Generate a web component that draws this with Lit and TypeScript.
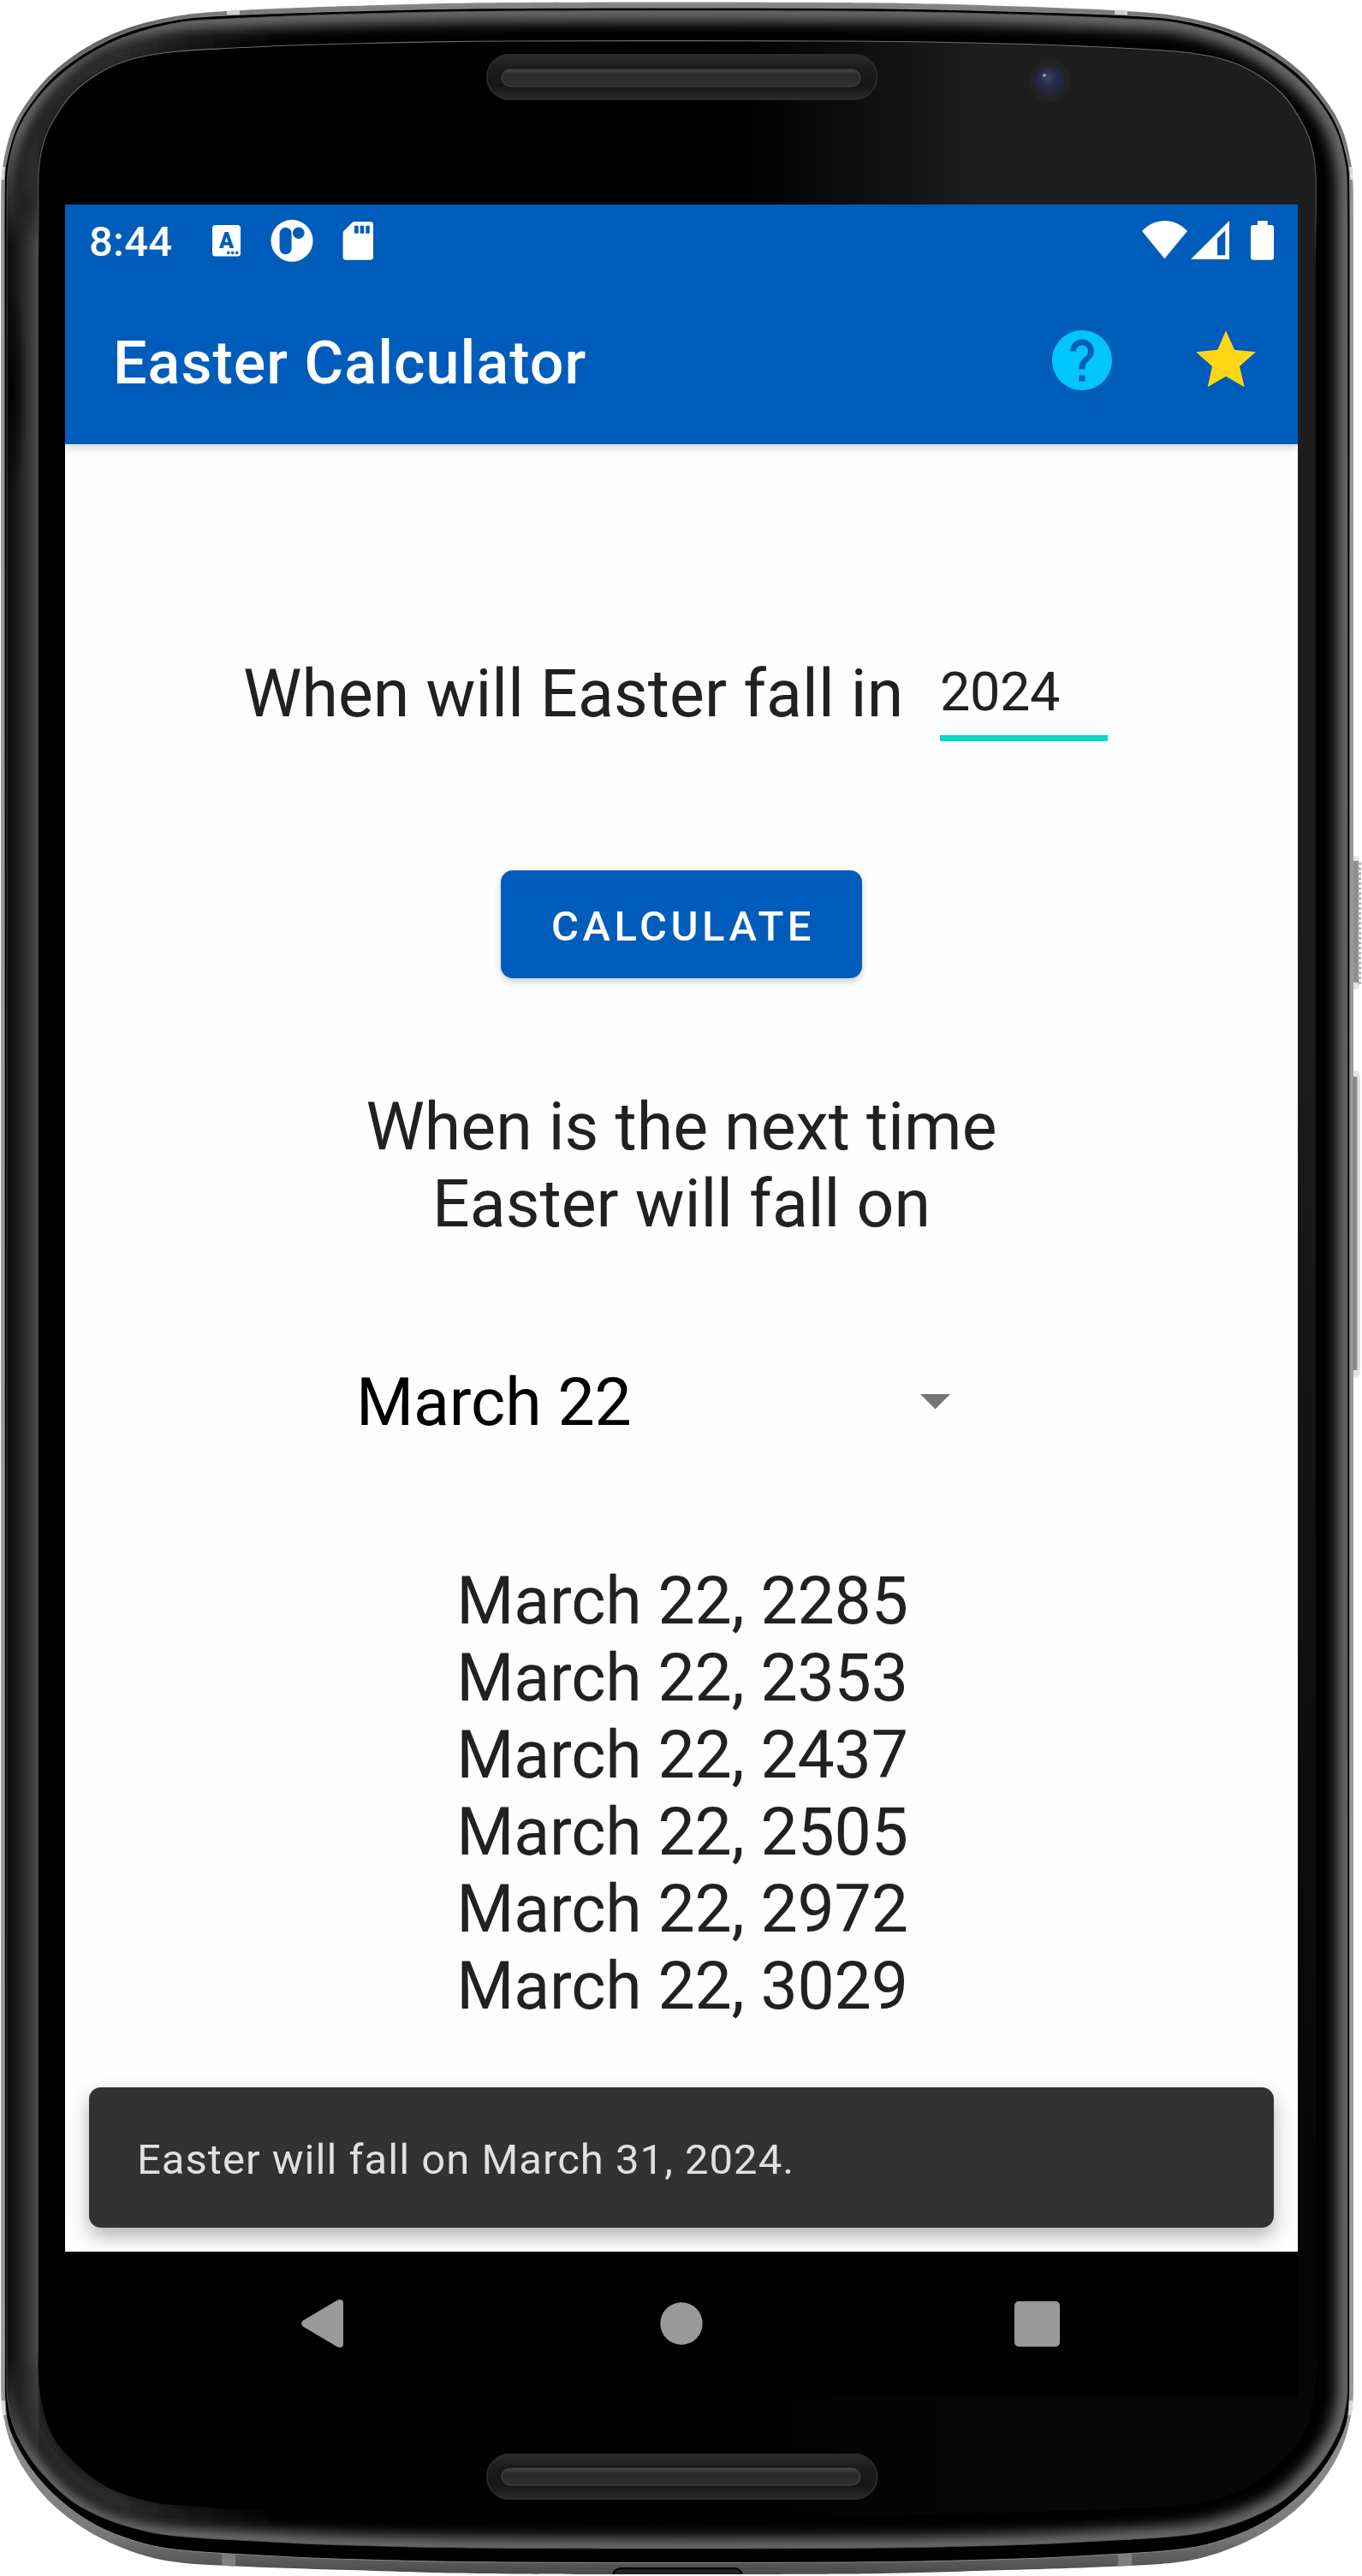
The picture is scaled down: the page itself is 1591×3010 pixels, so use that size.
import { LitElement, html, css, svg } from "lit";
import { customElement, property, state } from "lit/decorators.js";

type Point = [number, number];

const BODY_AXIS = 1582;

/** Smooth curve through the points, as cubic segments. */
function curve(points: Point[]): string {
  let d = "";
  for (let i = 0; i < points.length - 1; i++) {
    const p0 = points[Math.max(i - 1, 0)];
    const p1 = points[i];
    const p2 = points[i + 1];
    const p3 = points[Math.min(i + 2, points.length - 1)];
    const c1 = [p1[0] + (p2[0] - p0[0]) / 6, p1[1] + (p2[1] - p0[1]) / 6];
    const c2 = [p2[0] - (p3[0] - p1[0]) / 6, p2[1] - (p3[1] - p1[1]) / 6];
    d += `C${c1[0].toFixed(1)} ${c1[1].toFixed(1)} ${c2[0].toFixed(1)} ${c2[1].toFixed(1)} ${p2[0]} ${p2[1]}`;
  }
  return d;
}

/** Closed symmetric outline from the left halves of its top and bottom edges. */
function outline(top: Point[], bottom: Point[]): string {
  const mirror = (points: Point[]): Point[] =>
    points.map(([x, y]): Point => [BODY_AXIS - x, y]).reverse();
  const upper = [...top, ...mirror(top)];
  const lower = [...bottom, ...mirror(bottom)].reverse();
  return `M${upper[0].join(" ")}${curve(upper)}L${lower[0].join(" ")}${curve(lower)}Z`;
}

const SHELL = outline(
  [[1, 260], [1.5, 215], [4, 190], [13, 154], [30, 122], [60, 86], [100, 56], [146, 34], [200, 20], [265, 13], [408, 7], [600, 3]],
  [[1, 2770], [1.5, 2805], [5, 2828], [13, 2856], [31, 2890], [61, 2926], [102, 2957], [153, 2981], [204, 2993.5], [275, 2998.5], [408, 3003], [600, 3007.5]],
);
const SEAM = outline(
  [[5, 260], [5.5, 210], [8, 187], [18, 152], [35, 122], [64, 88], [104, 59], [150, 37], [204, 23.5], [265, 18], [408, 13], [600, 9.5]],
  [[5.5, 2770], [6, 2805], [11, 2838], [31, 2877], [61, 2913], [102, 2945], [148, 2966], [204, 2979], [306, 2986], [408, 2990.5], [600, 2994]],
);
const BEVEL = outline(
  [[8, 260], [8.5, 212], [11, 188], [20, 155], [38, 123], [67, 91], [107, 62], [152, 41], [208, 26.5], [265, 22], [408, 16.5], [600, 13]],
  [[8, 2770], [9, 2805], [18, 2841], [41, 2880], [77, 2917], [112, 2938], [153, 2953], [204, 2963], [306, 2969.5], [408, 2974], [600, 2977.5]],
);
const GLASS = outline(
  [[45, 260], [45, 205], [49, 174], [59, 147], [84, 110], [120, 83], [158, 68], [209, 60], [306, 54.5], [408, 51], [600, 48]],
  [[45, 2740], [45.5, 2784], [54, 2828], [71, 2860], [112, 2898], [153, 2917], [204, 2927], [326, 2933], [480, 2937], [650, 2940]],
);

@customElement("device-shell")
export class DeviceShell extends LitElement {
  static styles = css`
    :host {
      display: block;
      width: 1591px;
      height: 3010px;
    }
    .drawing {
      display: block;
    }
  `;

  private speaker(top: number, slotTop: number, slotHeight: number) {
    return svg`
      <rect x="568" y=${top} width="457.5" height="54" rx="27" fill="url(#well)" />
      <rect x="569" y=${top + 1} width="455.5" height="52" rx="26" fill="none" stroke="#2a2a2a" stroke-width="2" />
      <rect x="584" y=${slotTop - 2} width="423" height=${slotHeight + 4} rx="13" fill="#151515" />
      <rect x="586" y=${slotTop} width="419" height=${slotHeight} rx="10.5" fill="url(#slot)" stroke="#3c3c3c" stroke-width="1.5" />
    `;
  }

  render() {
    return html`
      <svg class="drawing" width="1591" height="3010" viewBox="0 0 1591 3010" aria-hidden="true">
        <defs>
          <linearGradient id="metal" x1="0" y1="0" x2="0" y2="1">
            <stop offset="0" stop-color="#8a8a8a" />
            <stop offset="0.01" stop-color="#636363" />
            <stop offset="0.06" stop-color="#7d7d7d" />
            <stop offset="0.08" stop-color="#989b98" />
            <stop offset="0.93" stop-color="#989b98" />
            <stop offset="0.985" stop-color="#777" />
            <stop offset="1" stop-color="#4a4a4a" />
          </linearGradient>
          <linearGradient id="left-edge" gradientUnits="userSpaceOnUse" x1="8" y1="0" x2="46" y2="0">
            <stop offset="0" stop-color="#0a0a0a" />
            <stop offset="0.35" stop-color="#1d1d1d" />
            <stop offset="0.75" stop-color="#3a3a3a" />
            <stop offset="0.95" stop-color="#4a4a4a" />
            <stop offset="1" stop-color="#2a2a2a" />
          </linearGradient>
          <linearGradient id="left-fade" x1="0" y1="0" x2="0" y2="1">
            <stop offset="0" stop-color="#000" />
            <stop offset="0.05" stop-color="#fff" />
            <stop offset="0.95" stop-color="#fff" />
            <stop offset="1" stop-color="#000" />
          </linearGradient>
          <linearGradient id="corner-fade" gradientUnits="userSpaceOnUse" x1="130" y1="0" x2="330" y2="0">
            <stop offset="0" stop-color="#2b2b2b" />
            <stop offset="1" stop-color="#2b2b2b" stop-opacity="0" />
          </linearGradient>
          <linearGradient id="glare" gradientUnits="userSpaceOnUse" x1="860" y1="0" x2="1150" y2="0">
            <stop offset="0" stop-color="#000" />
            <stop offset="1" stop-color="#1d1d1d" />
          </linearGradient>
          <linearGradient id="glare-fade" x1="0" y1="0" x2="0" y2="1">
            <stop offset="0.35" stop-color="#000" stop-opacity="0" />
            <stop offset="0.85" stop-color="#000" stop-opacity="0.78" />
          </linearGradient>
          <linearGradient id="rim" x1="0" y1="0" x2="0" y2="1">
            <stop offset="0" stop-color="#6e6e6e" />
            <stop offset="0.07" stop-color="#4a4a4a" />
            <stop offset="0.09" stop-color="#4a4a4a" stop-opacity="0" />
          </linearGradient>
          <linearGradient id="well" x1="0" y1="0" x2="0" y2="1">
            <stop offset="0" stop-color="#2e2e2e" />
            <stop offset="0.3" stop-color="#1c1c1c" />
            <stop offset="0.7" stop-color="#161616" />
            <stop offset="1" stop-color="#2c2c2c" />
          </linearGradient>
          <linearGradient id="slot" x1="0" y1="0" x2="0" y2="1">
            <stop offset="0" stop-color="#4a4a4a" />
            <stop offset="0.3" stop-color="#2a2a2a" />
            <stop offset="1" stop-color="#303030" />
          </linearGradient>
          <linearGradient id="key" x1="0" y1="0" x2="1" y2="0">
            <stop offset="0" stop-color="#777" />
            <stop offset="0.55" stop-color="#9c9c9c" />
            <stop offset="0.75" stop-color="#efefef" />
            <stop offset="1" stop-color="#cfcfcf" />
          </linearGradient>
          <radialGradient id="lens" cx="0.45" cy="0.4" r="0.6">
            <stop offset="0" stop-color="#3c4464" />
            <stop offset="0.5" stop-color="#262b48" />
            <stop offset="1" stop-color="#20222f" />
          </radialGradient>
          <radialGradient id="smudge">
            <stop offset="0" stop-color="#000" stop-opacity="0.85" />
            <stop offset="1" stop-color="#000" stop-opacity="0" />
          </radialGradient>
          <mask id="left-mask"><rect x="0" y="150" width="60" height="2740" fill="url(#left-fade)" /></mask>
          <clipPath id="bevel-clip"><path d=${BEVEL} /></clipPath>
          <clipPath id="shell-clip"><path d=${SHELL} /></clipPath>
          <filter id="soft" x="-5%" y="-5%" width="110%" height="110%">
            <feGaussianBlur stdDeviation="8" />
          </filter>
        </defs>

        <rect x="1578" y="1000" width="10" height="156" rx="4" fill="#e4e4e4" />
        <rect x="1581" y="1006" width="6" height="142" fill="#8f8f8f" />
        <path d="M1588 1008V1150" stroke="#a8a8a8" stroke-width="4" stroke-dasharray="2.6 3.2" />
        <rect x="1578" y="1251" width="10.500" height="359" rx="5" fill="#e4e4e4" />
        <rect x="1581" y="1258" width="7.500" height="343" fill="url(#key)" />

        <path d=${SHELL} fill="url(#metal)" />
        <g clip-path="url(#shell-clip)">
          <rect x="265" y="8" width="15" height="14" fill="#cfcfcf" />
          <rect x="1302" y="8" width="15" height="14" fill="#cfcfcf" />
          <rect x="0" y="195" width="9" height="15" fill="#dcdcdc" />
          <rect x="1573" y="195" width="9" height="15" fill="#dcdcdc" />
          <rect x="0" y="2805" width="12" height="17" fill="#dcdcdc" />
          <rect x="1570" y="2805" width="12" height="17" fill="#dcdcdc" />
          <rect x="259" y="2975" width="16" height="28" fill="#808080" />
          <rect x="1306" y="2975" width="16" height="28" fill="#808080" />
          <rect x="716" y="3001" width="151" height="20" rx="9" fill="#222" stroke="#000" stroke-width="2" />
        </g>
        <path d=${SEAM} fill="#000" stroke="#8b8b8b" stroke-width="1" />

        <g clip-path="url(#bevel-clip)">
          <path d=${BEVEL} fill="#000" />
          <path d=${BEVEL} fill="none" stroke="#707070" stroke-width="24" filter="url(#soft)" />
          <path
            d="M110 62C150 42 200 34 340 38V62C180 66 120 80 84 118C60 145 50 170 40 230H20C24 150 60 100 110 62Z"
            fill="url(#corner-fade)"
            filter="url(#soft)"
          />
          <path
            d="M20 2780C26 2860 80 2930 160 2945C220 2952 280 2950 340 2950V2930C200 2930 120 2910 80 2870C60 2840 50 2820 44 2780Z"
            fill="url(#corner-fade)"
            filter="url(#soft)"
          />
          <rect x="5" y="150" width="42" height="2740" fill="url(#left-edge)" mask="url(#left-mask)" />
          <ellipse cx="14" cy="455" rx="18" ry="130" fill="url(#smudge)" />
        </g>
        <path d=${BEVEL} fill="none" stroke="#5a5a5a" stroke-width="0.8" />

        <path d=${GLASS} fill="url(#glare)" />
        <path d=${GLASS} fill="url(#glare-fade)" />
        <path d=${GLASS} fill="none" stroke="url(#rim)" stroke-width="1.2" />

        ${this.speaker(63, 81, 20)} ${this.speaker(2867, 2884, 20)}

        <circle cx="1226" cy="94" r="25" fill="#232323" />
        <ellipse cx="1226" cy="95" rx="17" ry="18" fill="url(#lens)" />
        <circle cx="1220" cy="88" r="2" fill="#8e97b8" />
      </svg>
    `;
  }
}

@customElement("status-bar")
export class StatusBar extends LitElement {
  @property() time = "";

  static styles = css`
    :host {
      display: flex;
      align-items: flex-start;
      height: 84px;
      padding: 0 28px;
      box-sizing: border-box;
      color: #fff;
      fill: #fff;
    }
    .clock {
      width: 144px;
      padding-top: 15px;
      font: 500 49px/58px Roboto, sans-serif;
      letter-spacing: 0.2px;
    }
    .icon {
      display: block;
      flex: none;
    }
    .circle {
      margin-left: 35px;
    }
    .card {
      margin-left: 34px;
    }
    .wifi {
      margin-left: auto;
    }
    .signal {
      margin-left: 4px;
    }
    .battery {
      margin-left: 25px;
    }
    .cut {
      fill: #005cbb;
    }
    .letter {
      font: 900 25px Roboto, sans-serif;
      text-anchor: middle;
    }
  `;

  render() {
    return html`
      <span class="clock">${this.time}</span>
      <svg class="icon" width="33" height="84" viewBox="0 0 33 84">
        <rect y="24" width="33" height="36.5" rx="3.5" />
        <text class="cut letter" x="16.5" y="51">A</text>
        <g class="cut">
          <circle cx="18.7" cy="56.4" r="1.8" />
          <circle cx="23.7" cy="56.4" r="1.8" />
          <circle cx="28.7" cy="56.4" r="1.8" />
        </g>
      </svg>
      <svg class="icon circle" width="50" height="84" viewBox="0 0 50 84">
        <circle cx="25" cy="42.3" r="24.5" />
        <rect class="cut" x="10.6" y="26.7" width="14" height="31.5" rx="7" />
        <circle class="cut" cx="32.8" cy="33.3" r="6.8" />
      </svg>
      <svg class="icon card" width="36" height="84" viewBox="0 0 36 84">
        <path d="M14 20H32.5Q36 20 36 23.5V61.2Q36 64.7 32.5 64.7H4Q.6 64.7 .6 61.2V33.5Q.6 31.8 1.7 30.7L11.5 21Q12.5 20 14 20Z" />
        <path class="cut" d="M14 24.7h4.7v9H14zM20.7 24.7h4.5v9h-4.5zM27.3 24.7h4.5v9h-4.5z" />
      </svg>
      <svg class="icon wifi" width="53" height="84" viewBox="0 0 53 84">
        <path d="M26.3 63.3L0 31C7.5 23 16.5 19 26.5 19S45.500 23 53 31Z" />
      </svg>
      <svg class="icon signal" width="45" height="84" viewBox="0 0 45 84">
        <path fill-rule="evenodd" d="M0 64L45 19V64ZM31 39.500V59.300H40.300V30.500Z" />
      </svg>
      <svg class="icon battery" width="27" height="84" viewBox="0 0 27 84">
        <path d="M8 19H19.700V24H24Q27 24 27 27V61.700Q27 64.700 24 64.700H3Q0 64.700 0 61.700V27Q0 24 3 24H8Z" />
      </svg>
    `;
  }
}

@customElement("app-root")
export class AppRoot extends LitElement {
  @state() private year = "2024";
  @state() private day = "March 22";
  @state() private years = [2285, 2353, 2437, 2505, 2972, 3029];

  static styles = css`
    :host {
      display: block;
      width: 1591px;
      height: 3010px;
      overflow: hidden;
      background: #fff;
      font-family: Roboto, sans-serif;
    }
    .device {
      display: grid;
    }
    .shell,
    .screen {
      grid-area: 1 / 1;
    }
    .screen {
      z-index: 1;
      display: flex;
      flex-direction: column;
      width: 1440px;
      height: 2560px;
      margin: 239px 0 0 76px;
      background: #000;
    }
    .header {
      z-index: 1;
      background: #005cbb;
      box-shadow: 0 3px 10px rgba(0, 0, 0, 0.2);
      clip-path: inset(0 0 -20px 0);
    }
    .app-bar {
      display: flex;
      align-items: center;
      height: 196px;
      padding: 0 42px 0 56px;
      box-sizing: border-box;
    }
    .title {
      flex: 1;
      margin: 0;
      padding-top: 5px;
      font-size: 70px;
      font-weight: 500;
      line-height: 82px;
      letter-spacing: 1.05px;
      color: #fff;
    }
    .action {
      display: block;
      margin-left: 84px;
    }
    .help {
      fill: #00c5ff;
    }
    .star {
      fill: #ffd616;
    }
    .content {
      display: flex;
      flex: 1;
      flex-direction: column;
      align-items: center;
      overflow: hidden;
      background: #fefefe;
      font-size: 77px;
      line-height: 90px;
      color: #212121;
    }
    .question {
      display: flex;
      align-self: stretch;
      height: 100px;
      margin-top: 247px;
      padding-left: 208px;
    }
    .label {
      width: 814px;
      letter-spacing: 0.08px;
      white-space: nowrap;
    }
    .year {
      width: 196px;
      height: 100px;
      padding: 6px 0 0;
      box-sizing: border-box;
      border-bottom: 7px solid #03dac6;
      font-size: 63px;
      line-height: 74px;
      letter-spacing: -0.4px;
    }
    .calculate {
      width: 422px;
      height: 126px;
      margin-top: 151px;
      padding: 5px 0 0 4px;
      border: 0;
      border-radius: 14px;
      background: #005cbb;
      box-shadow: 0 4px 8px rgba(0, 0, 0, 0.2);
      font: 500 49px/58px Roboto, sans-serif;
      letter-spacing: 4.5px;
      color: #fff;
    }
    .prompt {
      width: 800px;
      margin: 129px 0 0;
      letter-spacing: 0.03px;
      text-align: center;
    }
    .select {
      display: flex;
      align-items: center;
      justify-content: space-between;
      align-self: flex-start;
      width: 694px;
      margin: 142px 0 0 340px;
      letter-spacing: -0.15px;
      color: #000;
    }
    .arrow {
      margin-bottom: 3px;
    }
    .results {
      margin: 142px 0 0;
      padding: 0 0 0 2px;
      letter-spacing: -0.2px;
      list-style: none;
    }
    .snackbar {
      display: flex;
      align-items: center;
      align-self: stretch;
      height: 164px;
      margin: auto 28px 28px;
      padding: 5px 56px 0;
      box-sizing: border-box;
      border-radius: 14px;
      background: #323232;
      box-shadow: 0 10px 22px rgba(0, 0, 0, 0.3);
      font-size: 49px;
      line-height: 58px;
      letter-spacing: 1.02px;
      color: #e0e0e0;
    }
    .nav {
      display: grid;
      grid-template-columns: 440px 1fr 440px;
      align-items: center;
      justify-items: center;
      height: 168px;
      padding: 0 81px;
      fill: #999;
    }
    .back {
      margin-right: 1px;
    }
    .recents {
      margin-right: 8px;
    }
  `;

  render() {
    return html`
      <div class="device">
        <device-shell class="shell"></device-shell>
        <div class="screen">
          <header class="header">
            <status-bar time="8:44"></status-bar>
            <div class="app-bar">
              <h1 class="title">Easter Calculator</h1>
              <svg class="action help" width="84" height="84" viewBox="0 0 24 24">
                <path d="M12 2C6.480 2 2 6.480 2 12s4.480 10 10 10 10-4.480 10-10S17.520 2 12 2zm1 17h-2v-2h2v2zm2.070-7.750l-.9.920C13.450 12.900 13 13.500 13 15h-2v-.5c0-1.100.450-2.100 1.170-2.830l1.240-1.260c.370-.360.590-.860.590-1.410 0-1.100-.9-2-2-2s-2 .9-2 2H8c0-2.210 1.790-4 4-4s4 1.790 4 4c0 .880-.360 1.680-.930 2.250z" />
              </svg>
              <svg class="action star" width="84" height="84" viewBox="0 0 84 84">
                <path d="M42 7.300L52 29.700 77 32.300 58 49 63.700 73.300 42 60.700 20.700 73.300 26 49 7 32.300 32.300 29.700Z" />
              </svg>
            </div>
          </header>
          <main class="content">
            <div class="question">
              <span class="label">When will Easter fall in</span>
              <div class="year">${this.year}</div>
            </div>
            <button class="calculate">CALCULATE</button>
            <p class="prompt">When is the next time<br />Easter will fall on</p>
            <div class="select">
              <span>${this.day}</span>
              <svg class="arrow" width="35" height="18" viewBox="0 0 35 18"><path d="M0 0H35L17.500 17.500Z" fill="#757575" /></svg>
            </div>
            <ul class="results">
              ${this.years.map((year) => html`<li>${this.day}, ${year}</li>`)}
            </ul>
            <div class="snackbar">Easter will fall on March 31, ${this.year}.</div>
          </main>
          <nav class="nav">
            <svg class="back" width="49" height="56" viewBox="0 0 49 56">
              <path d="M2 24.500L41.500 1C46 -1 49 0 49 4V52C49 56 46 57 41.500 55L2 31.500Q-2 28 2 24.500Z" />
            </svg>
            <svg width="50" height="50" viewBox="0 0 50 50"><circle cx="25" cy="25" r="24.700" /></svg>
            <svg class="recents" width="53" height="53" viewBox="0 0 53 53"><rect width="53" height="53" rx="5" /></svg>
          </nav>
        </div>
      </div>
    `;
  }
}
